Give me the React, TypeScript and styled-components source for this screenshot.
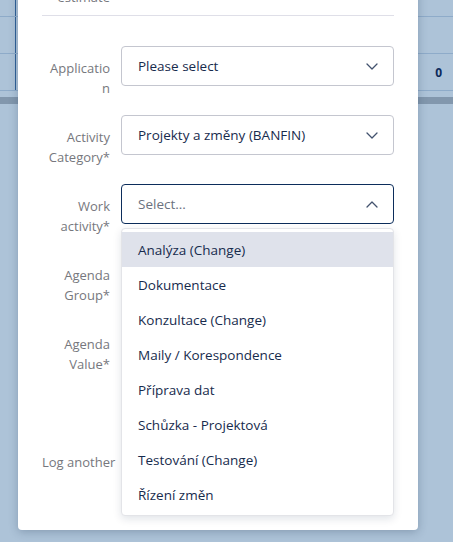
import styled, { createGlobalStyle } from "styled-components";

const GlobalStyle = createGlobalStyle`
  html, body {
    margin: 0;
    padding: 0;
  }
  body {
    background: #adc3d8;
    font-family: "Open Sans", "Noto Sans", sans-serif;
    overflow: hidden;
  }
`;

const activities = [
  "Analýza (Change)",
  "Dokumentace",
  "Konzultace (Change)",
  "Maily / Korespondence",
  "Příprava dat",
  "Schůzka - Projektová",
  "Testování (Change)",
  "Řízení změn",
];

const Chevron = ({ up }: { up?: boolean }) => (
  <svg width="12" height="7" viewBox="0 0 12 7" fill="none">
    <path
      d={up ? "M1 6L6 1L11 6" : "M1 1L6 6L11 1"}
      stroke="#42526e"
      strokeWidth="1.3"
      strokeLinecap="round"
      strokeLinejoin="round"
    />
  </svg>
);

export const App = () => {
  return (
    <StyledPage>
      <GlobalStyle />
      <Table>
        <TableRow $h={16}>
          <EdgeCell />
          <Spacer />
        </TableRow>
        <TableRow $h={36}>
          <EdgeCell />
          <Spacer />
        </TableRow>
        <TableRow $h={36}>
          <EdgeCell />
          <Spacer />
          <ValueCell>0</ValueCell>
        </TableRow>
        <TableGap />
        <TableFooter />
      </Table>

      <Modal>
        <FieldRow>
          <Label>Remaining estimate</Label>
          <Control />
        </FieldRow>
        <Divider />

        <Fields>
          <FieldRow>
            <Label>Application</Label>
            <SelectBox>
              <SelectValue>Please select</SelectValue>
              <Chevron />
            </SelectBox>
          </FieldRow>

          <FieldRow>
            <Label>Activity Category*</Label>
            <SelectBox>
              <SelectValue>Projekty a změny (BANFIN)</SelectValue>
              <Chevron />
            </SelectBox>
          </FieldRow>

          <FieldRow>
            <Label>Work activity*</Label>
            <SelectWrap>
              <SelectBox $focused>
                <SelectValue $placeholder>Select...</SelectValue>
                <Chevron up />
              </SelectBox>
              <Menu>
                {activities.map((item, index) => (
                  <MenuItem key={item} $active={index === 0}>
                    {item}
                  </MenuItem>
                ))}
              </Menu>
            </SelectWrap>
          </FieldRow>

          {/* covered by the open menu */}
          <FieldRow>
            <Label>Agenda Group*</Label>
            <SelectBox>
              <span />
              <Chevron />
            </SelectBox>
          </FieldRow>

          <FieldRow>
            <Label>Agenda Value*</Label>
            <SelectBox>
              <span />
              <Chevron />
            </SelectBox>
          </FieldRow>

          <FieldRow>
            <Label />
            <TextArea />
          </FieldRow>

          <CheckRow>
            <span>Log another</span>
            <CheckBox />
          </CheckRow>
        </Fields>
      </Modal>
    </StyledPage>
  );
};

export default App;

const StyledPage = styled.div`
  width: 100vw;
  height: 100vh;
  position: relative;
  overflow: hidden;
`;

const Table = styled.div`
  display: flex;
  flex-direction: column;
`;

const TableRow = styled.div<{ $h: number }>`
  height: ${(p) => p.$h}px;
  display: flex;
  border-bottom: 1px solid #8eabc9;
`;

const EdgeCell = styled.div`
  width: 15px;
  border-right: 1px solid #2e6098;
`;

const Spacer = styled.div`
  flex: 1;
`;

const ValueCell = styled.div`
  display: flex;
  align-items: center;
  padding-right: 11px;
  font-size: 12px;
  font-weight: 700;
  color: #0b2a5b;
`;

const TableGap = styled.div`
  height: 6px;
`;

const TableFooter = styled.div`
  height: 7px;
  background: #8297ad;
`;

const Modal = styled.div`
  position: absolute;
  left: 18px;
  top: -60px;
  width: 400px;
  box-sizing: border-box;
  padding: 15px 24px 58px;
  background: #fff;
  border-radius: 4px;
  box-shadow: 0 2px 10px rgba(30, 50, 80, 0.28);
`;

const Divider = styled.div`
  height: 1px;
  background: #dfdfe8;
  margin: 8px 0 30px;
`;

const Fields = styled.div`
  display: flex;
  flex-direction: column;
  gap: 17px;
`;

const FieldRow = styled.div`
  display: grid;
  grid-template-columns: 68px 1fr;
  column-gap: 11px;
  align-items: start;
`;

const Label = styled.div`
  padding: 12px 0 0 3px;
  text-align: right;
  font-size: 13px;
  line-height: 20px;
  color: #76777d;
  overflow-wrap: anywhere;
`;

const Control = styled.div`
  height: 40px;
`;

const SelectWrap = styled.div`
  position: relative;
`;

const SelectBox = styled.div<{ $focused?: boolean }>`
  height: 40px;
  box-sizing: border-box;
  display: flex;
  align-items: center;
  justify-content: space-between;
  padding: 0 15px 0 16px;
  border: 1px solid ${(p) => (p.$focused ? "#0c2d5b" : "#c4c6cf")};
  border-radius: 4px;
  background: #fff;
`;

const SelectValue = styled.span<{ $placeholder?: boolean }>`
  font-size: 13.5px;
  font-weight: 500;
  color: ${(p) => (p.$placeholder ? "#6b7280" : "#172b4d")};
`;

const Menu = styled.div`
  position: absolute;
  top: 44px;
  left: 0;
  right: 0;
  z-index: 5;
  padding: 3px 0;
  background: #fff;
  border: 1px solid #e3e4e8;
  border-radius: 4px;
  box-shadow: 0 3px 8px rgba(9, 30, 66, 0.12);
`;

const MenuItem = styled.div<{ $active?: boolean }>`
  height: 35px;
  display: flex;
  align-items: center;
  padding-left: 16px;
  font-size: 13.5px;
  font-weight: 500;
  color: #172b4d;
  background: ${(p) => (p.$active ? "#dfe2eb" : "transparent")};
`;

const TextArea = styled.div`
  height: 42px;
  border: 1px solid #c4c6cf;
  border-radius: 4px;
`;

const CheckRow = styled.label`
  display: flex;
  align-items: center;
  gap: 10px;
  font-size: 13px;
  line-height: 20px;
  color: #76777d;
`;

const CheckBox = styled.span`
  width: 14px;
  height: 14px;
  border: 1px solid #c4c6cf;
  border-radius: 3px;
`;
